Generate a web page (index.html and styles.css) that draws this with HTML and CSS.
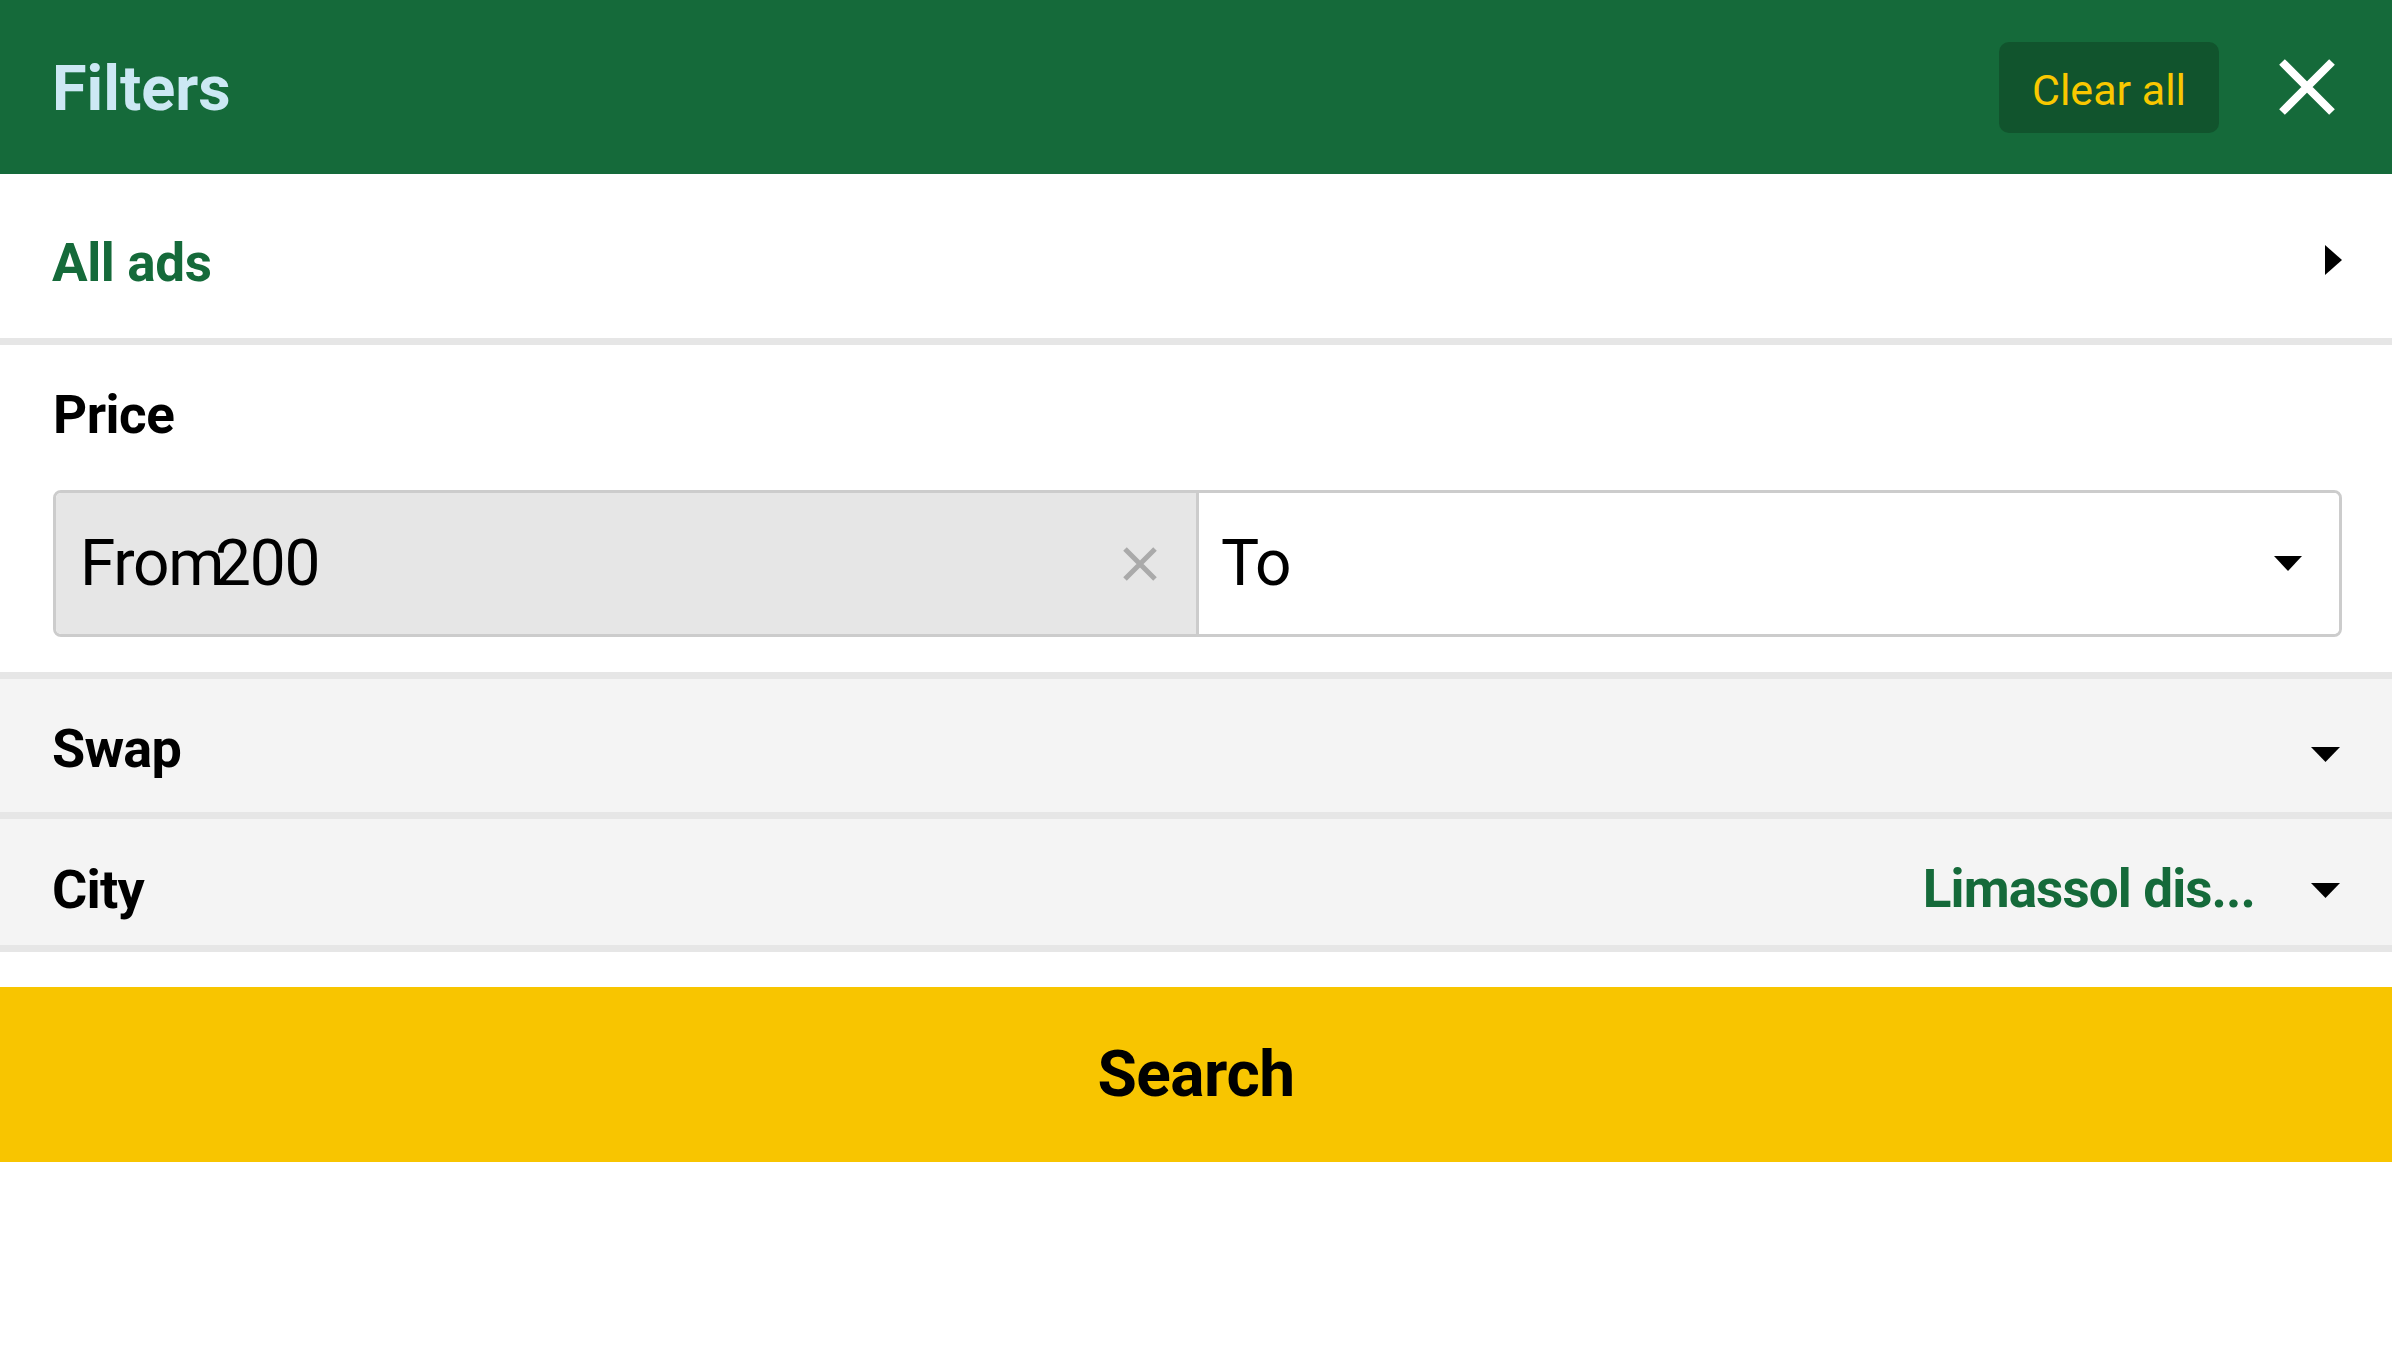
FILE: index.html
```html
<!DOCTYPE html>
<html lang="en">
<head>
<meta charset="utf-8">
<title>Filters</title>
<link rel="stylesheet" href="styles.css">
</head>
<body>
<div class="page">
  <header class="topbar">
    <h1 class="title">Filters</h1>
    <div class="topbar-actions">
      <button class="clear-btn">Clear all</button>
      <span class="close-icon">
        <svg width="56" height="56" viewBox="0 0 56 56"><path d="M3 3 L53 53 M53 3 L3 53" stroke="#fff" stroke-width="8" stroke-linecap="butt"/></svg>
      </span>
    </div>
  </header>

  <div class="row row-all">
    <span class="row-link">All ads</span>
    <svg class="chev-right" width="17" height="30" viewBox="0 0 17 30"><path d="M0 0 L17 15 L0 30 Z" fill="#000"/></svg>
  </div>

  <section class="price">
    <div class="price-label">Price</div>
    <div class="range">
      <div class="range-from">
        <span class="from-text">From</span><span class="from-value">200</span>
        <svg class="clear-x" width="36" height="36" viewBox="0 0 36 36"><path d="M3 3 L33 33 M33 3 L3 33" stroke="#aaa" stroke-width="5"/></svg>
      </div>
      <div class="range-to">
        <span class="to-text">To</span>
        <svg class="caret" width="28" height="15" viewBox="0 0 28 15"><path d="M0 0 L28 0 L14 15 Z" fill="#000"/></svg>
      </div>
    </div>
  </section>

  <div class="row row-grey row-swap">
    <span class="row-label">Swap</span>
    <svg class="caret caret-row" width="29" height="15" viewBox="0 0 29 15"><path d="M0 0 L29 0 L14.5 15 Z" fill="#000"/></svg>
  </div>

  <div class="row row-grey row-city">
    <span class="row-label">City</span>
    <div class="row-end">
      <span class="row-value">Limassol dis...</span>
      <svg class="caret caret-row" width="29" height="15" viewBox="0 0 29 15"><path d="M0 0 L29 0 L14.5 15 Z" fill="#000"/></svg>
    </div>
  </div>

  <div class="spacer"></div>
  <button class="search-btn">Search</button>
</div>
</body>
</html>
```

FILE: styles.css
```css
* { box-sizing: border-box; }
html, body { margin: 0; padding: 0; background: #fff; }
body { font-family: Roboto, "Noto Sans", "Liberation Sans", sans-serif; color: #000; }

.page { width: 100%; }

.topbar {
  height: 174px;
  background: #156a3a;
  display: flex;
  align-items: center;
  justify-content: space-between;
  padding: 0 57px 0 52px;
}
.title {
  margin: 0;
  padding-top: 2px;
  font-size: 63px;
  font-weight: 700;
  color: #cce8f4;
  line-height: 1;
}
.topbar-actions { display: flex; align-items: center; gap: 60px; }
.clear-btn {
  width: 220px;
  height: 91px;
  background: #11542d;
  border: none;
  border-radius: 10px;
  color: #f9c800;
  font-family: Roboto, sans-serif;
  font-size: 43px;
  font-weight: 400;
  padding: 5px 0 0;
}
.close-icon { display: flex; width: 56px; height: 56px; }

.row {
  display: flex;
  align-items: center;
  justify-content: space-between;
  padding: 0 52px;
  border-bottom: 7px solid #e6e6e6;
}
.row-all { height: 171px; padding-top: 8px; background: #fff; }
.row-link { font-size: 53px; font-weight: 700; color: #156a3a; letter-spacing: -0.4px; margin-top: 5px; }
.chev-right { margin-right: -2px; }

.price {
  padding: 39px 50px 35px 53px;
  border-bottom: 7px solid #e6e6e6;
}
.price-label { font-size: 53px; font-weight: 700; line-height: 62px; margin-bottom: 44px; letter-spacing: -0.5px; }
.range {
  display: flex;
  height: 147px;
  border: 3px solid #cccccc;
  border-radius: 8px;
  overflow: hidden;
  font-size: 64px;
  font-weight: 400;
}
.range-from {
  flex: 0 0 1143px;
  background: #e6e6e6;
  border-right: 3px solid #cccccc;
  display: flex;
  align-items: center;
  padding: 0 38px 0 24px;
  letter-spacing: -1.3px;
}
.from-value { margin-left: -8px; }
.clear-x { margin-left: auto; }
.range-to {
  flex: 1;
  background: #fff;
  display: flex;
  align-items: center;
  justify-content: space-between;
  padding: 0 37px 0 22px;
  letter-spacing: -1px;
}

.row-grey { background: #f4f4f4; }
.row-swap { height: 140px; }
.row-city { height: 133px; }
.row-label { font-size: 54px; font-weight: 700; letter-spacing: -0.8px; }
.row-swap .row-label { margin-top: 5px; }
.row-city .row-label { margin-top: 14px; }
.row-swap .caret-row { margin-top: 18px; }
.row-city .caret-row { margin-top: 16px; }
.row-end { display: flex; align-items: center; gap: 56px; }
.row-value { font-size: 53px; font-weight: 700; color: #156a3a; letter-spacing: -0.9px; margin-top: 14px; }

.spacer { height: 35px; }
.search-btn {
  display: block;
  width: 100%;
  height: 175px;
  background: #f8c500;
  border: none;
  font-family: Roboto, sans-serif;
  font-size: 64px;
  font-weight: 700;
  letter-spacing: -0.5px;
  color: #000;
  padding: 0;
}
```
